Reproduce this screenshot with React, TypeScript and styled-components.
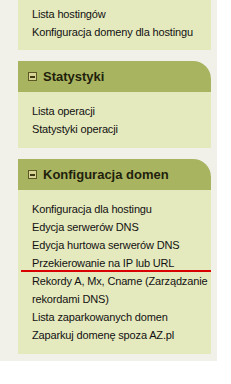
import { createGlobalStyle, styled } from "styled-components";

const GlobalStyle = createGlobalStyle`
    html, body {
        margin: 0;
        padding: 0;
        background: #ffffff;
    }
`

const Sidebar = styled.div`
    width: 217px;
    box-sizing: border-box;
    padding: 0 6px 7px 18px;
    background-color: #f1f1ea;
    font-family: "Liberation Sans", Arial, sans-serif;
    display: flex;
    flex-direction: column;
    gap: 11px;
`

const Panel = styled.div`
    display: flex;
    flex-direction: column;
`

const Header = styled.div`
    height: 31px;
    display: flex;
    align-items: center;
    gap: 6px;
    padding-left: 10px;
    background-color: #a9b461;
    border-top-right-radius: 18px;
    font-size: 13px;
    font-weight: 700;
    color: #1f1f0c;
`

const Toggle = styled.span`
    width: 9px;
    height: 9px;
    box-sizing: border-box;
    border: 1px solid #5b5824;
    background-color: #d8d496;
    display: flex;
    align-items: center;
    justify-content: center;

    &::after {
        content: "";
        width: 5px;
        height: 2px;
        background-color: #3d3a14;
    }
`

const Body = styled.ul<{ $clipped?: boolean }>`
    margin: 0;
    list-style: none;
    padding: ${p => (p.$clipped ? "5px 0 9px" : "10px 0 10px")} 14px;
    background-color: #e5e9be;
    font-size: 11px;
    line-height: 18px;
    letter-spacing: -0.15px;
    color: #111;
`

const Item = styled.li<{ $marked?: boolean }>`
    position: relative;

    &::after {
        content: "";
        display: ${p => (p.$marked ? "block" : "none")};
        position: absolute;
        left: -11px;
        bottom: 0;
        width: 190px;
        height: 2px;
        background-color: #d90000;
    }
`

interface SectionProps {
    title?: string,
    items: string[],
    marked?: string,
}

function Section(props: SectionProps) {
    return (
        <Panel>
            {props.title && (
                <Header>
                    <Toggle />
                    {props.title}
                </Header>
            )}
            <Body $clipped={!props.title}>
                {props.items.map(item => (
                    <Item key={item} $marked={item === props.marked}>{item}</Item>
                ))}
            </Body>
        </Panel>
    )
}

export default function App() {
    return (
        <>
            <GlobalStyle />
            <Sidebar>
                <Section items={["Lista hostingów", "Konfiguracja domeny dla hostingu"]} />
                <Section
                    title="Statystyki"
                    items={["Lista operacji", "Statystyki operacji"]}
                />
                <Section
                    title="Konfiguracja domen"
                    marked="Przekierowanie na IP lub URL"
                    items={[
                        "Konfiguracja dla hostingu",
                        "Edycja serwerów DNS",
                        "Edycja hurtowa serwerów DNS",
                        "Przekierowanie na IP lub URL",
                        "Rekordy A, Mx, Cname (Zarządzanie rekordami DNS)",
                        "Lista zaparkowanych domen",
                        "Zaparkuj domenę spoza AZ.pl",
                    ]}
                />
            </Sidebar>
        </>
    )
}
